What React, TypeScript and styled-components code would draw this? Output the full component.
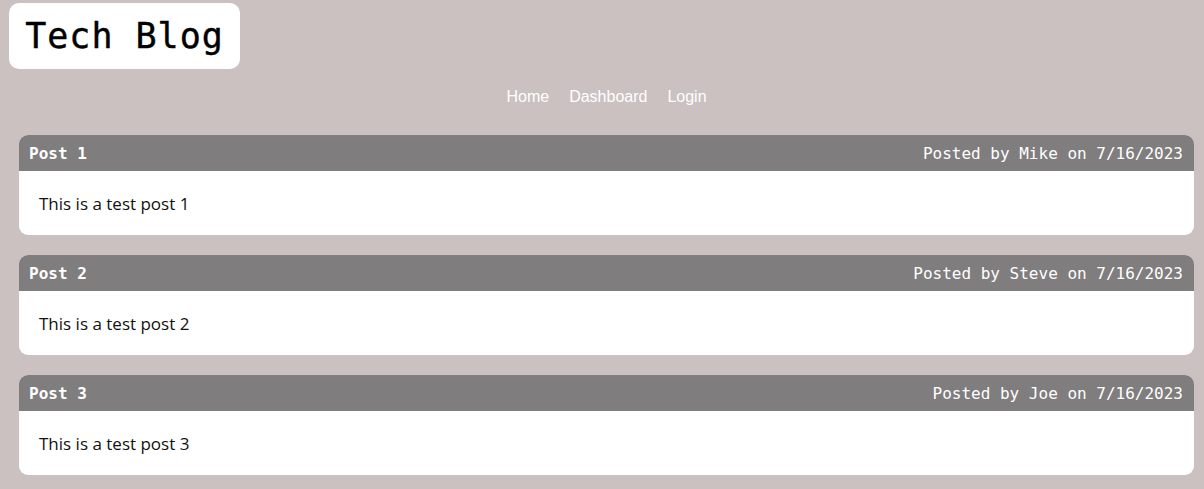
import React from "react";
import styled, { createGlobalStyle } from "styled-components";

const GlobalStyle = createGlobalStyle`
  html, body { margin: 0; padding: 0; }
  body {
    background: #cbc1c0;
    font-family: "Liberation Sans", Arial, sans-serif;
  }
`;

const Page = styled.div`
  display: flex;
  flex-direction: column;
  padding: 3px 10px 0 9px;
`;

const Header = styled.header`
  display: flex;
  flex-direction: column;
`;

const TitleBox = styled.div`
  align-self: flex-start;
  background: #ffffff;
  border-radius: 10px;
  height: 66px;
  width: 231px;
  display: flex;
  align-items: center;
  justify-content: center;
`;

const Title = styled.h1`
  margin: 0;
  font-family: "DejaVu Sans Mono", "Liberation Mono", monospace;
  font-weight: normal;
  font-size: 35px;
  letter-spacing: 1px;
  color: #000;
  -webkit-text-stroke: 0.4px #000;
`;

const Nav = styled.nav`
  display: flex;
  justify-content: center;
  gap: 20px;
  margin-top: 17px;
  padding-left: 10px;
`;

const NavLink = styled.a`
  color: #ffffff;
  font-family: "Liberation Sans", Arial, sans-serif;
  font-size: 16px;
  line-height: 22px;
  text-decoration: none;
`;

const Posts = styled.main`
  display: flex;
  flex-direction: column;
  gap: 20px;
  margin-top: 27px;
  padding-left: 10px;
`;

const Card = styled.article`
  background: #ffffff;
  border-radius: 9px;
  overflow: hidden;
  display: flex;
  flex-direction: column;
`;

const CardHead = styled.div`
  background: #7f7d7e;
  height: 36px;
  display: flex;
  align-items: center;
  justify-content: space-between;
  padding: 0 11px 0 10px;
  color: #ffffff;
  font-family: "DejaVu Sans Mono", "Liberation Mono", monospace;
  font-size: 16px;
`;

const PostTitle = styled.span`
  font-weight: bold;
`;

const Meta = styled.span`
  font-weight: normal;
`;

const CardBody = styled.div`
  height: 64px;
  display: flex;
  align-items: center;
  padding-left: 20px;
  font-family: "Open Sans", "DejaVu Sans", sans-serif;
  font-size: 17px;
  color: #111;
`;

const posts = [
  { title: "Post 1", author: "Mike", date: "7/16/2023", body: "This is a test post 1" },
  { title: "Post 2", author: "Steve", date: "7/16/2023", body: "This is a test post 2" },
  { title: "Post 3", author: "Joe", date: "7/16/2023", body: "This is a test post 3" },
];

export default function App() {
  return (
    <>
      <GlobalStyle />
      <Page>
        <Header>
          <TitleBox>
            <Title>Tech Blog</Title>
          </TitleBox>
          <Nav>
            <NavLink href="#">Home</NavLink>
            <NavLink href="#">Dashboard</NavLink>
            <NavLink href="#">Login</NavLink>
          </Nav>
        </Header>
        <Posts>
          {posts.map((p) => (
            <Card key={p.title}>
              <CardHead>
                <PostTitle>{p.title}</PostTitle>
                <Meta>
                  Posted by {p.author} on {p.date}
                </Meta>
              </CardHead>
              <CardBody>{p.body}</CardBody>
            </Card>
          ))}
        </Posts>
      </Page>
    </>
  );
}
